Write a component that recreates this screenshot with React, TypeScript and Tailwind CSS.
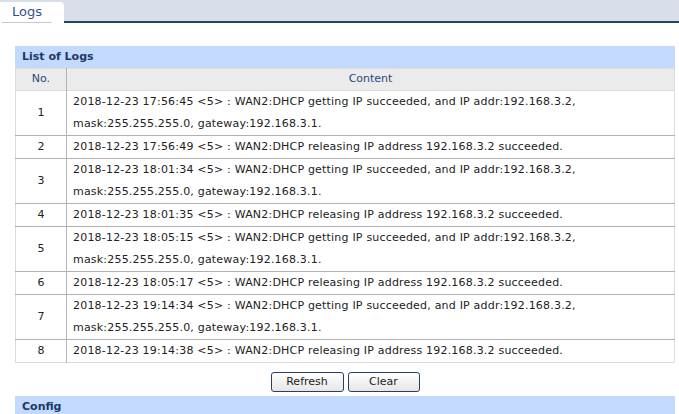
const logs = [
  {
    no: 1,
    lines: [
      "2018-12-23 17:56:45 <5> : WAN2:DHCP getting IP succeeded, and IP addr:192.168.3.2,",
      "mask:255.255.255.0, gateway:192.168.3.1.",
    ],
  },
  { no: 2, lines: ["2018-12-23 17:56:49 <5> : WAN2:DHCP releasing IP address 192.168.3.2 succeeded."] },
  {
    no: 3,
    lines: [
      "2018-12-23 18:01:34 <5> : WAN2:DHCP getting IP succeeded, and IP addr:192.168.3.2,",
      "mask:255.255.255.0, gateway:192.168.3.1.",
    ],
  },
  { no: 4, lines: ["2018-12-23 18:01:35 <5> : WAN2:DHCP releasing IP address 192.168.3.2 succeeded."] },
  {
    no: 5,
    lines: [
      "2018-12-23 18:05:15 <5> : WAN2:DHCP getting IP succeeded, and IP addr:192.168.3.2,",
      "mask:255.255.255.0, gateway:192.168.3.1.",
    ],
  },
  { no: 6, lines: ["2018-12-23 18:05:17 <5> : WAN2:DHCP releasing IP address 192.168.3.2 succeeded."] },
  {
    no: 7,
    lines: [
      "2018-12-23 19:14:34 <5> : WAN2:DHCP getting IP succeeded, and IP addr:192.168.3.2,",
      "mask:255.255.255.0, gateway:192.168.3.1.",
    ],
  },
  { no: 8, lines: ["2018-12-23 19:14:38 <5> : WAN2:DHCP releasing IP address 192.168.3.2 succeeded."] },
];

function SectionHeader({ title }: { title: string }) {
  return (
    <div className="h-[22px] bg-[#c3d9fd] pl-[7px] text-[11px] font-bold leading-[22px] text-[#1b3968]">
      {title}
    </div>
  );
}

function Button({ label, width }: { label: string; width: string }) {
  return (
    <button
      type="button"
      className={`h-[20px] ${width} rounded-[3px] border border-[#27405f] bg-gradient-to-b from-white to-[#e6e6e6] text-[11px] leading-[18px] text-[#1c1c1c]`}
    >
      {label}
    </button>
  );
}

export default function App() {
  return (
    <div className="min-h-[414px] bg-white font-['DejaVu_Sans',sans-serif]">
      {/* tab strip */}
      <div className="flex h-[23px] bg-[#d8dfea]">
        <div className="mt-[2px] w-[64px] rounded-tr-[4px] bg-white pl-[2px]">
          <div className="w-[50px] border-b border-[#c4cbd1] pl-[10px] text-[13px] leading-[20px] text-[#34508f]">
            Logs
          </div>
        </div>
        <div className="flex-1 border-b-2 border-[#1d4a5b]" />
      </div>

      <div className="ml-[15px] mt-[23px] w-[660px]">
        <SectionHeader title="List of Logs" />
        <table className="w-full border-collapse border border-[#dcdcdc]">
          <thead>
            <tr className="h-[22px] bg-[#ebebeb] text-[11px] text-[#27497d]">
              <th className="w-[51px] border-r border-[#b4b4b4] font-normal">No.</th>
              <th className="font-normal">Content</th>
            </tr>
          </thead>
          <tbody>
            {logs.map((log, i) => (
              <tr
                key={log.no}
                className={`text-[11px] text-[#222] ${
                  i === 0 ? "border-t border-[#dcdcdc]" : "border-t border-[#b0b0b0]"
                }`}
              >
                <td className="border-r border-[#b4b4b4] text-center">{log.no}</td>
                <td className="pl-[6px] leading-[22px] tracking-[0.2px]">
                  {log.lines.map((l) => (
                    <div key={l} className="whitespace-pre">
                      {l}
                    </div>
                  ))}
                </td>
              </tr>
            ))}
          </tbody>
        </table>

        <div className="mt-[9px] flex justify-center gap-[4px]">
          <Button label="Refresh" width="w-[73px]" />
          <Button label="Clear" width="w-[72px]" />
        </div>

        <div className="mt-[4px]">
          <SectionHeader title="Config" />
        </div>
      </div>
    </div>
  );
}
